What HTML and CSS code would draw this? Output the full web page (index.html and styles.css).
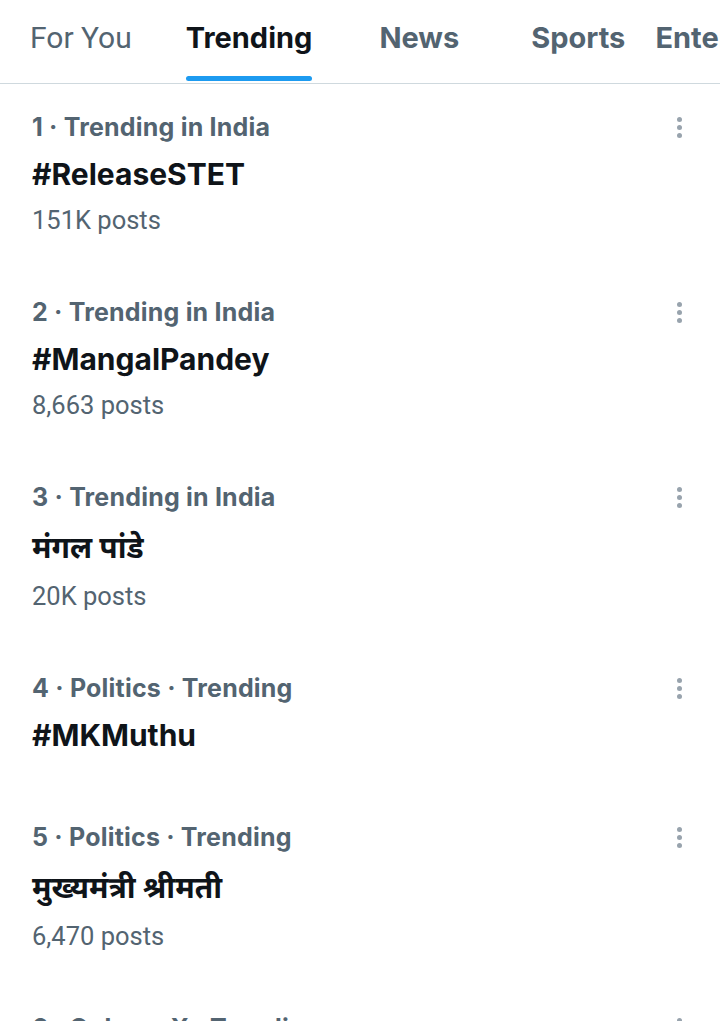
FILE: index.html
```html
<!DOCTYPE html>
<html lang="en">
<head>
    <meta charset="UTF-8">
    <meta name="viewport" content="width=device-width, initial-scale=1.0">
    <title>Explore - Trending</title>
    <link rel="stylesheet" href="styles.css">
</head>
<body>
    <nav class="tabs">
        <a class="tab" href="#">For You</a>
        <a class="tab active" href="#">Trending</a>
        <a class="tab" href="#">News</a>
        <a class="tab" href="#">Sports</a>
        <a class="tab" href="#">Entertainment</a>
    </nav>

    <div class="trends">
        <div class="trend">
            <div class="trend-body">
                <p class="meta">1 · Trending in India</p>
                <p class="title">#ReleaseSTET</p>
                <p class="posts">151K posts</p>
            </div>
            <button class="more" aria-label="More"><span></span><span></span><span></span></button>
        </div>
        <div class="trend">
            <div class="trend-body">
                <p class="meta">2 · Trending in India</p>
                <p class="title">#MangalPandey</p>
                <p class="posts">8,663 posts</p>
            </div>
            <button class="more" aria-label="More"><span></span><span></span><span></span></button>
        </div>
        <div class="trend">
            <div class="trend-body">
                <p class="meta">3 · Trending in India</p>
                <p class="title hi" lang="hi">मंगल पांडे</p>
                <p class="posts">20K posts</p>
            </div>
            <button class="more" aria-label="More"><span></span><span></span><span></span></button>
        </div>
        <div class="trend no-posts">
            <div class="trend-body">
                <p class="meta">4 · Politics · Trending</p>
                <p class="title">#MKMuthu</p>
            </div>
            <button class="more" aria-label="More"><span></span><span></span><span></span></button>
        </div>
        <div class="trend">
            <div class="trend-body">
                <p class="meta">5 · Politics · Trending</p>
                <p class="title hi" lang="hi">मुख्यमंत्री श्रीमती</p>
                <p class="posts">6,470 posts</p>
            </div>
            <button class="more" aria-label="More"><span></span><span></span><span></span></button>
        </div>
        <div class="trend">
            <div class="trend-body">
                <p class="meta">6 · Only on X · Trending</p>
                <p class="title">#XTrending</p>
                <p class="posts">12.4K posts</p>
            </div>
            <button class="more" aria-label="More"><span></span><span></span><span></span></button>
        </div>
    </div>
</body>
</html>
```

FILE: styles.css
```css
body {
    margin: 0;
    background: #fff;
    color: #0f1419;
    font-family: Roboto, "Noto Sans", "Noto Sans Devanagari", sans-serif;
    overflow: hidden;
}
.tabs {
    display: flex;
    height: 83px;
    border-bottom: 1px solid #cfd9de;
    white-space: nowrap;
    overflow: hidden;
    padding-left: 30px;
}
.tab {
    position: relative;
    height: 82px;
    line-height: 76px;
    color: #536471;
    text-decoration: none;
    font-family: Inter, Roboto, sans-serif;
    font-size: 29px;
    font-weight: 700;
    flex-shrink: 0;
}
.tab:nth-child(1) {
    font-family: Roboto, sans-serif;
    font-size: 30px;
    font-weight: 400;
    margin-right: 54px;
}
.tab:nth-child(2) {
    margin-right: 67px;
}
.tab:nth-child(3) {
    margin-right: 72px;
}
.tab:nth-child(4) {
    margin-right: 30px;
}
.tab.active {
    color: #0f1419;
}
.tab.active::after {
    content: "";
    position: absolute;
    left: 0;
    right: 0;
    bottom: 1px;
    height: 5px;
    border-radius: 3px;
    background: #1d9bf0;
}
.trend {
    display: flex;
    justify-content: space-between;
    padding: 27px 30px 34px 32px;
}
.trend p {
    margin: 0;
}
.meta {
    font-family: Inter, Roboto, sans-serif;
    font-size: 25px;
    line-height: 32px;
    letter-spacing: 0.2px;
    font-weight: 700;
    color: #536471;
}
.title {
    margin-top: 12px !important;
    font-family: Inter, Roboto, "Noto Sans Devanagari", sans-serif;
    font-size: 30px;
    line-height: 38px;
    font-weight: 700;
}
.title.hi {
    line-height: 44px;
}
.posts {
    margin-top: 12px !important;
    font-size: 25.5px;
    line-height: 30px;
    color: #536471;
}
.no-posts {
    padding-bottom: 40px;
}
.more {
    display: flex;
    flex-direction: column;
    gap: 3px;
    align-self: flex-start;
    margin-top: 6px;
    padding: 0 8px;
    border: none;
    background: none;
}
.more span {
    width: 5px;
    height: 5px;
    border-radius: 50%;
    background: #98a3ad;
}
```
